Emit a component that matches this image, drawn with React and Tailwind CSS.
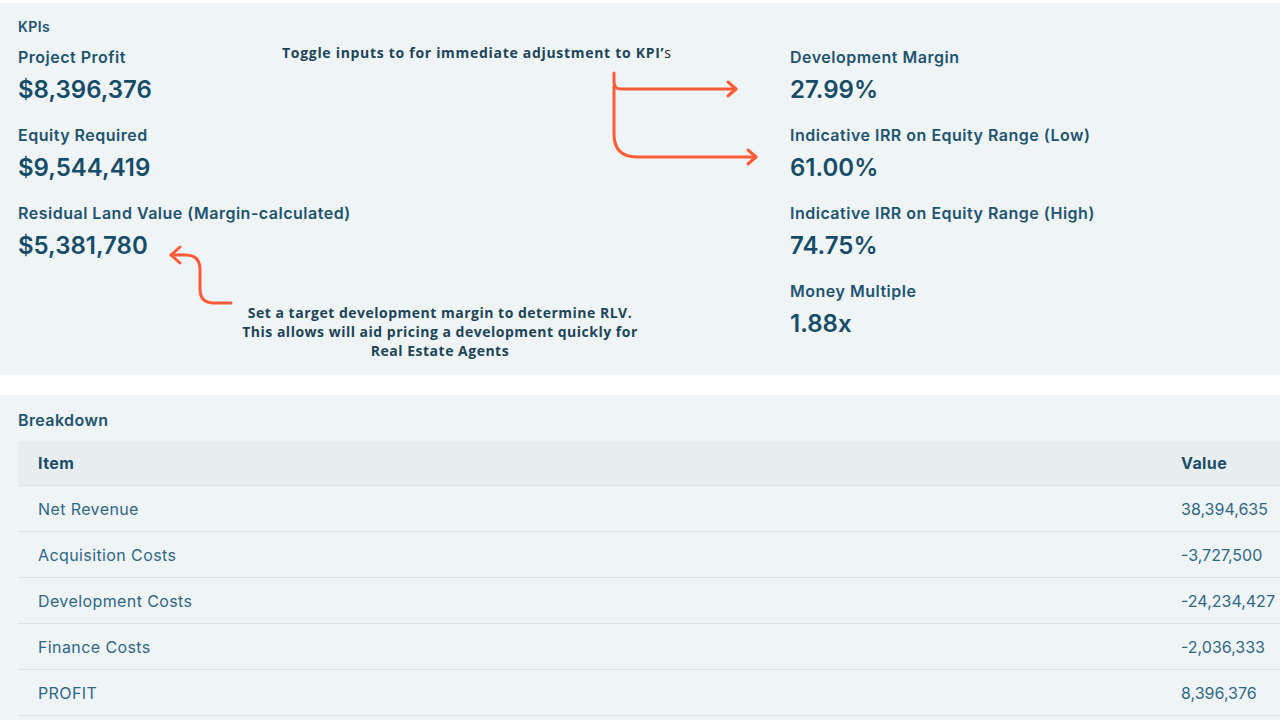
const leftKpis = [
  { label: 'Project Profit', value: '$8,396,376' },
  { label: 'Equity Required', value: '$9,544,419' },
  { label: 'Residual Land Value (Margin-calculated)', value: '$5,381,780' },
];

const rightKpis = [
  { label: 'Development Margin', value: '27.99%' },
  { label: 'Indicative IRR on Equity Range (Low)', value: '61.00%' },
  { label: 'Indicative IRR on Equity Range (High)', value: '74.75%' },
  { label: 'Money Multiple', value: '1.88x' },
];

const rows = [
  ['Net Revenue', '38,394,635'],
  ['Acquisition Costs', '-3,727,500'],
  ['Development Costs', '-24,234,427'],
  ['Finance Costs', '-2,036,333'],
  ['PROFIT', '8,396,376'],
];

function Kpi({ label, value }) {
  return (
    <div className="mb-[17px]">
      <div className="text-[16px] leading-6 font-semibold tracking-[0.5px] text-[#22536e]">{label}</div>
      <div className="mt-[5px] text-[24px] leading-8 font-semibold text-[#174c69]">{value}</div>
    </div>
  );
}

// orange callout arrows drawn over the KPI panel
function Arrows() {
  return (
    <svg className="absolute inset-0 pointer-events-none" width="1280" height="372" viewBox="0 3 1280 372">
      <g fill="none" stroke="#ff5b37" strokeWidth="3" strokeLinecap="round" strokeLinejoin="round">
        <path d="M231 303 H214 Q200 303 200 289 V270 Q200 255 186 255 H171" />
        <path d="M180 247 L171 255 L180 263" />
        <path d="M614 73 V82 Q614 89 621 89 H736" />
        <path d="M728 82 L736 89 L728 96" />
        <path d="M614 86 V134 Q614 157 637 157 H756" />
        <path d="M748 150 L756 157 L748 164" />
      </g>
    </svg>
  );
}

export default function App() {
  return (
    <div className="w-[1280px] h-[720px] overflow-hidden bg-white pt-[3px]" style={{ fontFamily: 'Inter, "Noto Sans", sans-serif' }}>
      {/* KPIs */}
      <section className="relative h-[372px] bg-[#eff4f7] px-[18px] pt-[14px]">
        <h2 className="text-[14px] leading-5 font-semibold tracking-[0.4px] text-[#22536e]">KPIs</h2>
        <div className="mt-2 flex">
          <div className="w-[772px]">
            {leftKpis.map((k) => (
              <Kpi key={k.label} {...k} />
            ))}
          </div>
          <div className="flex-1">
            {rightKpis.map((k) => (
              <Kpi key={k.label} {...k} />
            ))}
          </div>
        </div>

        <Arrows />

        <p
          className="absolute left-[282px] top-[40px] whitespace-nowrap text-[14px] leading-5 font-bold tracking-[0.7px] text-[#1e4458]"
          style={{ fontFamily: '"Open Sans", sans-serif' }}
        >
          Toggle inputs to for immediate adjustment to KPI’<span className="font-normal text-[#222]">s</span>
        </p>
        <p
          className="absolute left-[210px] w-[460px] top-[300px] text-center text-[14px] leading-[19px] font-bold tracking-[0.5px] text-[#1e4458]"
          style={{ fontFamily: '"Open Sans", sans-serif' }}
        >
          Set a target development margin to determine RLV.
          <br />
          This allows will aid pricing a development quickly for
          <br />
          Real Estate Agents
        </p>
      </section>

      <div className="h-5" />

      {/* Breakdown */}
      <section className="bg-[#eff4f7] pl-[18px] pt-[13px] h-[325px]">
        <h2 className="text-[16px] leading-6 font-semibold tracking-[0.4px] text-[#22536e]">Breakdown</h2>
        <div className="mt-[9px]">
          <div className="flex h-[45px] items-center bg-[#e8edf0] border-b border-[#dde3e7] text-[16px] font-bold tracking-[0.4px] text-[#1b4c68]">
            <div className="flex-1 px-5">Item</div>
            <div className="w-[119px] pl-5">Value</div>
          </div>
          {rows.map(([item, val]) => (
            <div key={item} className="flex h-[46px] items-center border-b border-[#dde3e7] text-[16px] tracking-[0.4px] text-[#2f6784]">
              <div className="flex-1 px-5">{item}</div>
              <div className="w-[119px] pl-5 whitespace-nowrap tracking-normal">{val}</div>
            </div>
          ))}
        </div>
      </section>
    </div>
  );
}
